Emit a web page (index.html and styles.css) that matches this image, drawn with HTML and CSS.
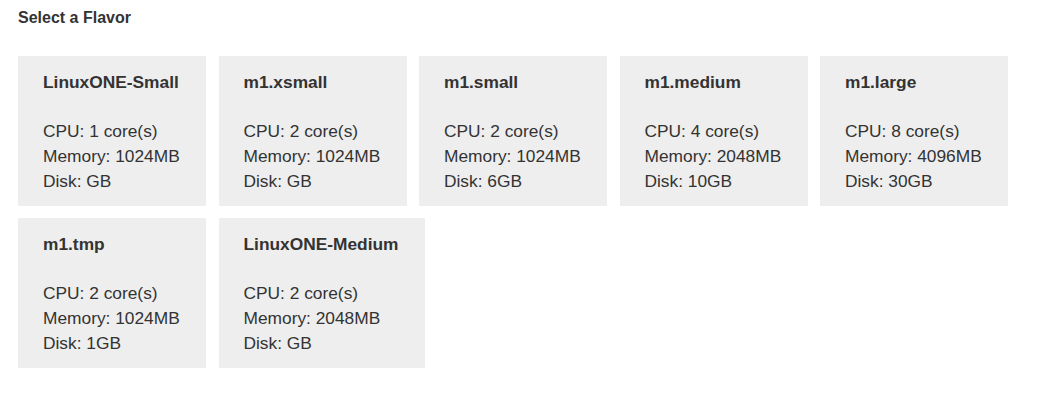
FILE: index.html
```html
<!DOCTYPE html>
<html>
<head>
<meta charset="utf-8">
<link rel="stylesheet" href="styles.css">
</head>
<body>
<div class="page">
  <div class="heading">Select a Flavor</div>
  <div class="flavors">
    <div class="flavor">
      <div class="name">LinuxONE-Small</div>
      <div class="spacer"></div>
      <div>CPU: 1 core(s)</div>
      <div>Memory: 1024MB</div>
      <div>Disk: GB</div>
    </div>
    <div class="flavor">
      <div class="name">m1.xsmall</div>
      <div class="spacer"></div>
      <div>CPU: 2 core(s)</div>
      <div>Memory: 1024MB</div>
      <div>Disk: GB</div>
    </div>
    <div class="flavor">
      <div class="name">m1.small</div>
      <div class="spacer"></div>
      <div>CPU: 2 core(s)</div>
      <div>Memory: 1024MB</div>
      <div>Disk: 6GB</div>
    </div>
    <div class="flavor">
      <div class="name">m1.medium</div>
      <div class="spacer"></div>
      <div>CPU: 4 core(s)</div>
      <div>Memory: 2048MB</div>
      <div>Disk: 10GB</div>
    </div>
    <div class="flavor">
      <div class="name">m1.large</div>
      <div class="spacer"></div>
      <div>CPU: 8 core(s)</div>
      <div>Memory: 4096MB</div>
      <div>Disk: 30GB</div>
    </div>
    <div class="flavor">
      <div class="name">m1.tmp</div>
      <div class="spacer"></div>
      <div>CPU: 2 core(s)</div>
      <div>Memory: 1024MB</div>
      <div>Disk: 1GB</div>
    </div>
    <div class="flavor">
      <div class="name">LinuxONE-Medium</div>
      <div class="spacer"></div>
      <div>CPU: 2 core(s)</div>
      <div>Memory: 2048MB</div>
      <div>Disk: GB</div>
    </div>
  </div>
</div>
</body>
</html>
```
FILE: styles.css
```css
html, body {
  margin: 0;
  padding: 0;
  background: #ffffff;
}
body {
  font-family: "Liberation Sans", Arial, Helvetica, sans-serif;
  color: #333333;
}
.page {
  padding: 7px 18px;
}
.heading {
  font-size: 16px;
  font-weight: bold;
  line-height: 22.86px;
  margin-bottom: 26px;
}
.flavors {
  display: flex;
  flex-wrap: wrap;
  column-gap: 12.5px;
  row-gap: 12px;
  align-items: flex-start;
}
.flavor {
  box-sizing: border-box;
  min-width: 188px;
  height: 150px;
  padding: 14px 26px 12px 25px;
  background: #eeeeee;
  font-size: 17.33px;
  line-height: 24.76px;
  white-space: nowrap;
}
.name {
  font-weight: bold;
}
.spacer {
  height: 24.76px;
}
```
